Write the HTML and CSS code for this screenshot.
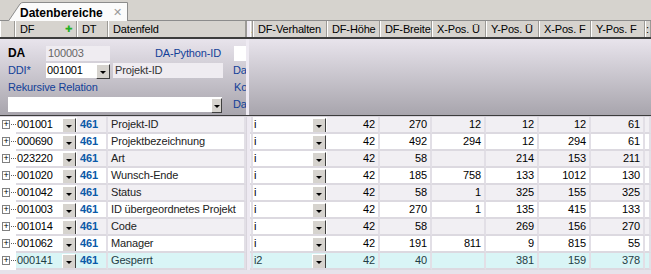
FILE: index.html
```html
<!DOCTYPE html>
<html>
<head>
    <title>Datenbereiche</title>
    <link rel="stylesheet" href="styles.css">
</head>
<body>
    <div class="tabbar">
        <div class="tab">
            <svg class="tab-shape" width="124" height="19" viewBox="0 0 124 19">
                <path d="M0.5 19 L12 2 Q13 0.5 15 0.5 L119.5 0.5 L119.5 19" fill="#fbfbfb" stroke="#8c8c8c"/>
            </svg>
            <span class="tab-title">Datenbereiche</span>
            <span class="tab-close">&#x2715;</span>
        </div>
    </div>

    <div class="grid-head">
        <div class="hcell"></div>
        <div class="hcell">DF <span class="plus">&#x271A;</span></div>
        <div class="hcell">DT</div>
        <div class="hcell">Datenfeld</div>
        <div class="splitter"></div>
        <div class="hcell dot">.</div>
        <div class="hcell">DF-Verhalten</div>
        <div class="hcell">DF-Höhe</div>
        <div class="hcell">DF-Breite</div>
        <div class="hcell">X-Pos. Ü</div>
        <div class="hcell">Y-Pos. Ü</div>
        <div class="hcell">X-Pos. F</div>
        <div class="hcell">Y-Pos. F</div>
        <div class="hcell dot">:</div>
    </div>

    <div class="panel">
        <div class="panel-left">
            <div class="prow">
                <span class="plabel bold">DA</span>
                <span class="field ro w64">100003</span>
                <span class="plabel blue right">DA-Python-ID</span>
                <span class="field white w14"></span>
            </div>
            <div class="prow">
                <span class="plabel blue">DDI*</span>
                <span class="combo w64"><span class="combo-text">001001</span><span class="drop"></span></span>
                <span class="field ro w110 dark">Projekt-ID</span>
                <span class="plabel blue cut">Da</span>
            </div>
            <div class="prow">
                <span class="plabel blue wide">Rekursive Relation</span>
                <span class="plabel blue cut">Ko</span>
            </div>
            <div class="prow">
                <span class="combo w214"><span class="combo-text"></span><span class="drop small"></span></span>
                <span class="plabel blue cut">Da</span>
            </div>
        </div>
        <div class="splitter"></div>
        <div class="panel-right"></div>
    </div>
    <div class="panel-line"></div>

    <div id="rows"></div>

    <script>
        const rows = [
            ["001001", "Projekt-ID", "i", 42, 270, 12, 12, 12, 61],
            ["000690", "Projektbezeichnung", "i", 42, 492, 294, 12, 294, 61],
            ["023220", "Art", "i", 42, 58, "", 214, 153, 211],
            ["001020", "Wunsch-Ende", "i", 42, 185, 758, 133, 1012, 130],
            ["001042", "Status", "i", 42, 58, 1, 325, 155, 325],
            ["001003", "ID übergeordnetes Projekt", "i", 42, 270, 1, 135, 415, 133],
            ["001014", "Code", "i", 42, 58, "", 269, 156, 270],
            ["001062", "Manager", "i", 42, 191, 811, 9, 815, 55],
            ["000141", "Gesperrt", "i2", 42, 40, "", 381, 159, 378]
        ];

        const container = document.getElementById("rows");

        rows.forEach((r, i) => {
            const row = document.createElement("div");
            row.className = "grid-row" + (i % 2 === 0 ? " odd" : " even") + (i === rows.length - 1 ? " selected" : "");
            let html = '<div class="cell tree"><span class="expander">+</span><span class="dots"></span></div>';
            html += '<div class="cell df"><span class="combo-text">' + r[0] + '</span><span class="drop"></span></div>';
            html += '<div class="cell dt">461</div>';
            html += '<div class="cell name">' + r[1] + '</div>';
            html += '<div class="splitter"></div>';
            html += '<div class="cell"></div>';
            html += '<div class="cell df"><span class="combo-text">' + r[2] + '</span><span class="drop"></span></div>';
            for (let k = 3; k < 9; k++) {
                html += '<div class="cell num">' + r[k] + '</div>';
            }
            html += '<div class="cell"></div>';
            row.innerHTML = html;
            container.appendChild(row);
        });
    </script>
</body>
</html>
```

FILE: styles.css
```css
body {
    margin: 0;
    font-family: "Liberation Sans", Arial, sans-serif;
    font-size: 11px;
    letter-spacing: -0.15px;
    color: #000;
    background-color: #e6e2ea;
    width: 651px;
    height: 274px;
    overflow: hidden;
}

/* tab strip */
.tabbar {
    height: 20px;
    background-color: #d6d3ce;
    border-bottom: 1px solid #8c8c8c;
    display: flex;
    align-items: flex-end;
}

.tab {
    position: relative;
    margin-left: 8px;
    margin-bottom: -1px;
    width: 120px;
    height: 19px;
    display: flex;
    align-items: center;
}

.tab-shape {
    position: absolute;
    left: 0;
    top: 0;
}

.tab-title {
    position: relative;
    margin-left: 12px;
    margin-top: 2px;
    font-weight: bold;
    font-size: 12px;
    letter-spacing: 0;
}

.tab-close {
    position: relative;
    margin-left: 10px;
    margin-top: 2px;
    color: #9a9a9a;
    font-size: 11px;
}

/* column headers */
.grid-head {
    display: grid;
    grid-template-columns: 15px 62px 31px 138px 4px 3px 74px 53px 52px 54px 53px 52px 54px 6px;
    height: 16px;
    background-color: #d6d3ce;
    border-bottom: 2px solid #3c3c3c;
}

.hcell {
    border-left: 1px solid #ffffff;
    border-right: 1px solid #9c9a96;
    padding-left: 4px;
    line-height: 16px;
    white-space: nowrap;
    overflow: hidden;
    display: flex;
    align-items: center;
}

.hcell.dot {
    padding-left: 0;
}

.plus {
    color: #22b022;
    font-size: 9px;
    margin-left: auto;
    margin-right: 3px;
}

.splitter {
    background-color: #eeeaf2;
    border-left: 1px solid #c8c4cc;
}

.grid-head .splitter {
    border-left: 1px solid #9c9a96;
}

/* DA panel */
.panel {
    display: flex;
    height: 76px;
    background: linear-gradient(#e8e4ec, #a8a5ad);
}

.panel-left {
    width: 238px;
    padding: 6px 0 0 8px;
    display: flex;
    flex-direction: column;
    gap: 1px;
    overflow: hidden;
}

.panel .splitter {
    width: 3px;
    border-left: none;
}

.panel-right {
    flex: 1;
}

.panel-line {
    height: 1px;
    background-color: #3c3c3c;
    border-bottom: 1px solid #d8d4dc;
}

.prow {
    display: flex;
    align-items: center;
    height: 16px;
    white-space: nowrap;
}

.plabel {
    width: 38px;
    flex-shrink: 0;
}

.plabel.bold {
    font-weight: bold;
    font-size: 12px;
}

.blue {
    color: #123f98;
}

.plabel.right {
    width: 111px;
    text-align: right;
    margin-right: 13px;
}

.plabel.wide {
    width: 226px;
}

.plabel.cut {
    width: auto;
    margin-left: 10px;
}

.prow:nth-child(3) .plabel.cut {
    margin-left: 0;
}

.prow:nth-child(4) .plabel.cut {
    margin-left: 11px;
}

.field {
    height: 15px;
    line-height: 15px;
    padding-left: 2px;
    box-sizing: border-box;
    flex-shrink: 0;
}

.field.ro {
    background-color: #efecf1;
    color: #666;
}

.field.dark {
    color: #333;
    margin-left: 3px;
}

.field.white {
    background-color: #fff;
}

.w64 {
    width: 64px;
}

.w110 {
    width: 110px;
}

.w14 {
    width: 14px;
}

.w214 {
    width: 214px;
}

.combo {
    display: flex;
    height: 15px;
    background-color: #fff;
    flex-shrink: 0;
}

.combo-text {
    flex: 1;
    line-height: 15px;
    padding-left: 1px;
    overflow: hidden;
}

.drop {
    width: 12px;
    height: 13px;
    margin-top: 1px;
    background-color: #d6d3ce;
    border-top: 1px solid #fff;
    border-left: 1px solid #fff;
    border-right: 1px solid #404040;
    border-bottom: 1px solid #404040;
    position: relative;
}

.drop::after {
    content: "";
    position: absolute;
    left: 3px;
    top: 6px;
    border-left: 3px solid transparent;
    border-right: 3px solid transparent;
    border-top: 3px solid #000;
}

.drop.small {
    width: 9px;
}

.drop.small::after {
    left: 2px;
}

/* data rows */
.grid-row {
    display: grid;
    grid-template-columns: 16px 61px 31px 138px 4px 3px 74px 53px 52px 54px 53px 52px 54px 6px;
    height: 17px;
}

.cell {
    border-right: 2px solid #e2dfe6;
    border-bottom: 2px solid #dcd9e0;
    line-height: 15px;
    white-space: nowrap;
    overflow: hidden;
}

.odd .cell {
    background-color: #f1eff3;
}

.even .cell {
    background-color: #ffffff;
}

.cell.tree {
    background-color: #fff;
    border-right: none;
    border-bottom-color: #ffffff;
    display: flex;
    align-items: center;
}

.expander {
    width: 7px;
    height: 7px;
    margin-left: 2px;
    border: 1px solid #808080;
    background-color: #fff;
    font-size: 9px;
    line-height: 7px;
    text-align: center;
    color: #000;
    letter-spacing: 0;
}

.dots {
    width: 5px;
    margin-left: 1px;
    border-top: 1px dotted #606060;
}

.cell.df {
    display: flex;
    background-color: #fff;
    border-right: none;
}

.odd .cell.df,
.even .cell.df {
    background-color: #fff;
}

.cell.df .combo-text {
    padding-left: 1px;
}

.cell.df .drop {
    margin-right: 1px;
}

.cell.dt {
    color: #0a5aa8;
    font-weight: bold;
    padding-left: 3px;
}

.cell.name {
    padding-left: 3px;
    color: #222;
}

.cell.num {
    text-align: right;
    padding-right: 3px;
}

.grid-row .splitter {
    border-left: 1px solid #d8d4dc;
}

.selected .cell,
.selected .cell.df {
    background-color: #d9f5f6;
    color: #1f3d44;
}

.selected .cell.dt {
    color: #0a5aa8;
}

.selected .cell.tree {
    background-color: #fff;
}
```
